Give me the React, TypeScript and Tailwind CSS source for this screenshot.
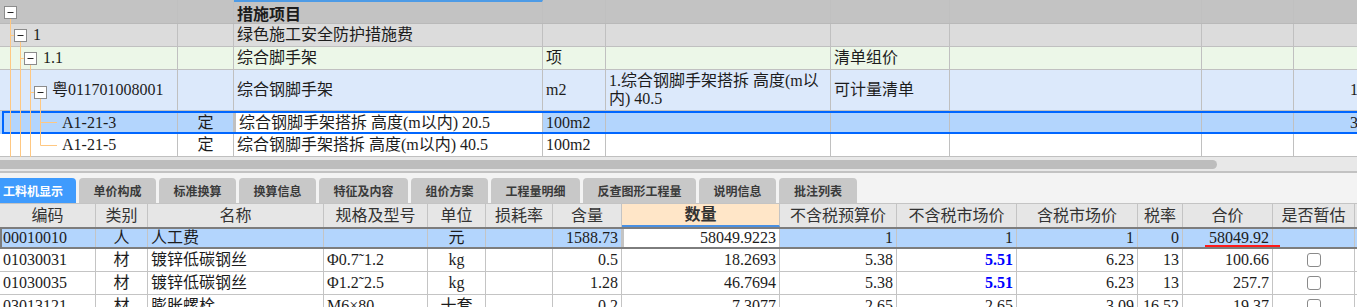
import clsx from 'clsx';

const topW = ['w-[178px]', 'w-[56px]', 'w-[309px]', 'w-[63px]', 'w-[225px]', 'w-[119px]', 'w-[252px]', 'w-[92px]', 'w-[112px]'];

const botW = [
  'w-[96px]', 'w-[52px]', 'w-[176px]', 'w-[104px]', 'w-[58px]', 'w-[67px]', 'w-[69px]',
  'w-[158px]', 'w-[117px]', 'w-[120px]', 'w-[121px]', 'w-[45px]', 'w-[90px]', 'w-[82px]', 'w-[60px]',
];
const botAlign = [
  'justify-start', 'justify-center', 'justify-start', 'justify-start', 'justify-center', 'justify-start',
  'justify-end', 'justify-end', 'justify-end', 'justify-end', 'justify-end', 'justify-end', 'justify-end',
  'justify-center', 'justify-start',
];
const headers = ['编码', '类别', '名称', '规格及型号', '单位', '损耗率', '含量', '数量', '不含税预算价', '不含税市场价', '含税市场价', '税率', '合价', '是否暂估', ''];

const tabs = [
  { label: '工料机显示', w: 'w-[76px]' },
  { label: '单价构成', w: 'w-[77px]' },
  { label: '标准换算', w: 'w-[77px]' },
  { label: '换算信息', w: 'w-[77px]' },
  { label: '特征及内容', w: 'w-[89px]' },
  { label: '组价方案', w: 'w-[77px]' },
  { label: '工程量明细', w: 'w-[89px]' },
  { label: '反查图形工程量', w: 'w-[113px]' },
  { label: '说明信息', w: 'w-[77px]' },
  { label: '批注列表', w: 'w-[78px]' },
];

const materials = [
  ['01030031', '材', '镀锌低碳钢丝', 'Φ0.7˜1.2', 'kg', '', '0.5', '18.2693', '5.38', '5.51', '6.23', '13', '100.66'],
  ['01030035', '材', '镀锌低碳钢丝', 'Φ1.2˜2.5', 'kg', '', '1.28', '46.7694', '5.38', '5.51', '6.23', '13', '257.7'],
  ['03013121', '材', '膨胀螺栓', 'M6×80', '十套', '', '0.2', '7.3077', '2.65', '2.65', '3.09', '16.52', '19.37'],
];

const TopCell = ({ i, children, className }: { i: number; children?: React.ReactNode; className?: string }) => (
  <div className={clsx('shrink-0 h-full flex items-center px-[3px] border-r border-[#c0c0c0] overflow-hidden whitespace-nowrap', topW[i], className)}>
    {children}
  </div>
);

const TreeLines = () => (
  <svg className="absolute left-0 top-0 pointer-events-none" width="178" height="157" viewBox="0 0 178 157">
    <g stroke="#ffc882" strokeWidth="1" fill="none">
      <path d="M10.5 18 V157 M20.5 41 V157 M30.5 64 V157 M40.5 98 V145.5" />
      <path d="M10.5 35.5 H14 M20.5 58.5 H24 M30.5 92.5 H34 M40.5 122.5 H57 M40.5 145.5 H57" />
    </g>
    {[
      [4.5, 6.5],
      [14.5, 29.5],
      [24.5, 52.5],
      [34.5, 86.5],
    ].map(([x, y]) => (
      <g key={x}>
        <rect x={x} y={y} width="12" height="12" fill="#fff" stroke="#8c8c8c" />
        <path d={`M${x + 3} ${y + 6} H${x + 9}`} stroke="#222" strokeWidth="1" />
      </g>
    ))}
  </svg>
);

const Checkbox = () => <div className="w-[14px] h-[14px] rounded-[3px] border border-[#8a8a8a] bg-white" />;

export default function App() {
  return (
    <div className="w-[1357px] h-[307px] overflow-hidden bg-white text-[16px] leading-none text-[#1c1c1c] font-['Liberation_Serif','Noto_Sans_CJK_SC',serif]">
      {/* upper tree grid */}
      <div className="relative h-[157px] overflow-hidden">
        <div className="flex w-[1406px] h-[24px] bg-[#c3c3c3] border-b border-[#b9b9b9]">
          <TopCell i={0} />
          <TopCell i={1} />
          <TopCell i={2} className="border-t-2 border-t-[#4d9be6] font-bold font-['Noto_Sans_CJK_SC',sans-serif]">措施项目</TopCell>
          {[3, 4, 5, 6, 7, 8].map((i) => <TopCell key={i} i={i} />)}
        </div>
        <div className="flex w-[1406px] h-[23px] bg-[#dcdcdc] border-b border-[#c0c0c0]">
          <TopCell i={0} className="pl-[33px]">1</TopCell>
          <TopCell i={1} />
          <TopCell i={2}>绿色施工安全防护措施费</TopCell>
          {[3, 4, 5, 6, 7, 8].map((i) => <TopCell key={i} i={i} />)}
        </div>
        <div className="flex w-[1406px] h-[23px] bg-[#ecf7e8] border-b border-[#c0c0c0]">
          <TopCell i={0} className="pl-[43px]">1.1</TopCell>
          <TopCell i={1} />
          <TopCell i={2}>综合脚手架</TopCell>
          <TopCell i={3}>项</TopCell>
          <TopCell i={4} />
          <TopCell i={5}>清单组价</TopCell>
          {[6, 7, 8].map((i) => <TopCell key={i} i={i} />)}
        </div>
        <div className="flex w-[1406px] h-[41px] bg-[#dce9fb] border-b border-[#c0c0c0]">
          <TopCell i={0} className="pl-[52px]">粤011701008001</TopCell>
          <TopCell i={1} />
          <TopCell i={2}>综合钢脚手架</TopCell>
          <TopCell i={3}>m2</TopCell>
          <TopCell i={4} className="leading-[18px]">
            <span>
              1.综合钢脚手架搭拆 高度(m以
              <br />
              内) 40.5
            </span>
          </TopCell>
          <TopCell i={5}>可计量清单</TopCell>
          <TopCell i={6} />
          <TopCell i={7} />
          <TopCell i={8} className="justify-end">1285.72</TopCell>
        </div>
        <div className="relative flex w-[1406px] h-[23px] bg-[#b3d5fd]">
          <TopCell i={0} className="pl-[62px]">A1-21-3</TopCell>
          <TopCell i={1} className="justify-center">定</TopCell>
          <TopCell i={2} className="bg-white border-x-2 border-[#0066ff]">综合钢脚手架搭拆 高度(m以内) 20.5</TopCell>
          <TopCell i={3}>100m2</TopCell>
          {[4, 5, 6, 7].map((i) => <TopCell key={i} i={i} />)}
          <TopCell i={8} className="justify-end">3065.33</TopCell>
          <div className="pointer-events-none absolute inset-y-0 left-[2px] right-0 border-2 border-[#0066ff]" />
        </div>
        <div className="flex w-[1406px] h-[23px] bg-white border-b border-[#c0c0c0]">
          <TopCell i={0} className="pl-[62px]">A1-21-5</TopCell>
          <TopCell i={1} className="justify-center">定</TopCell>
          <TopCell i={2}>综合钢脚手架搭拆 高度(m以内) 40.5</TopCell>
          <TopCell i={3}>100m2</TopCell>
          {[4, 5, 6, 7].map((i) => <TopCell key={i} i={i} />)}
          <TopCell i={8} className="justify-end">530.17</TopCell>
        </div>
        <TreeLines />
      </div>

      {/* horizontal scrollbar */}
      <div className="h-[14px] bg-[#e8e8e8] flex items-center">
        <div className="h-[9px] w-[1217px] rounded-r-full bg-[#bdbdbd]" />
      </div>
      <div className="h-[2px] bg-[#c2c2c2]" />

      {/* tabs */}
      <div className="h-[30px] bg-[#f3f3f3] flex items-end gap-[3px]">
        {tabs.map((t, idx) => (
          <div
            key={t.label}
            className={clsx(
              'h-[25px] shrink-0 flex items-center rounded-t-[4px] text-[12px] font-bold font-["Noto_Sans_CJK_SC",sans-serif]',
              t.w,
              idx === 0 ? 'bg-[#3f9bfd] text-white pl-[3px] rounded-tl-none' : 'bg-[#c8c8c8] text-[#3a3a3a] justify-center'
            )}
          >
            {t.label}
          </div>
        ))}
      </div>

      {/* resource grid */}
      <div className="flex w-[1415px] h-[24px] bg-[#e6e6e6] border-t border-[#c4c4c4]">
        {headers.map((h, i) => (
          <div
            key={i}
            className={clsx(
              'shrink-0 h-full flex items-center justify-center border-r border-[#c4c4c4] whitespace-nowrap text-[#333]',
              botW[i],
              i === 7 && 'bg-[#ffe6c8] font-bold border-b-2 border-b-[#4a90e2]'
            )}
          >
            {h}
          </div>
        ))}
      </div>
      <div className="flex w-[1415px] h-[22px] bg-[#b3d5fd] border-y-2 border-l-2 border-[#7d7d7d]">
        {['00010010', '人', '人工费', '', '元', '', '1588.73', '58049.9223', '1', '1', '1', '0', '58049.92', '', ''].map((v, i) => (
          <div
            key={i}
            className={clsx(
              'relative shrink-0 h-full flex items-center px-[3px] border-r border-[#c4c4c4] whitespace-nowrap',
              i === 0 ? 'w-[94px] pl-[1px]' : botW[i],
              botAlign[i],
              i === 7 && 'bg-white border-x-2 border-[#7d7d7d]'
            )}
          >
            {v}
            {i === 12 && <div className="absolute left-[22px] top-[16px] w-[75px] h-[2px] bg-[#ff1a1a]" />}
          </div>
        ))}
      </div>
      {materials.map((row) => (
        <div key={row[0]} className="flex w-[1415px] h-[23px] bg-white border-b border-[#c4c4c4]">
          {[...row, '', ''].map((v, i) => (
            <div
              key={i}
              className={clsx(
                'shrink-0 h-full flex items-center px-[3px] border-r border-[#c4c4c4] whitespace-nowrap',
                botW[i],
                botAlign[i],
                i === 9 && v === '5.51' && 'text-[#0000ff] font-bold'
              )}
            >
              {i === 13 ? <Checkbox /> : v}
            </div>
          ))}
        </div>
      ))}
    </div>
  );
}
